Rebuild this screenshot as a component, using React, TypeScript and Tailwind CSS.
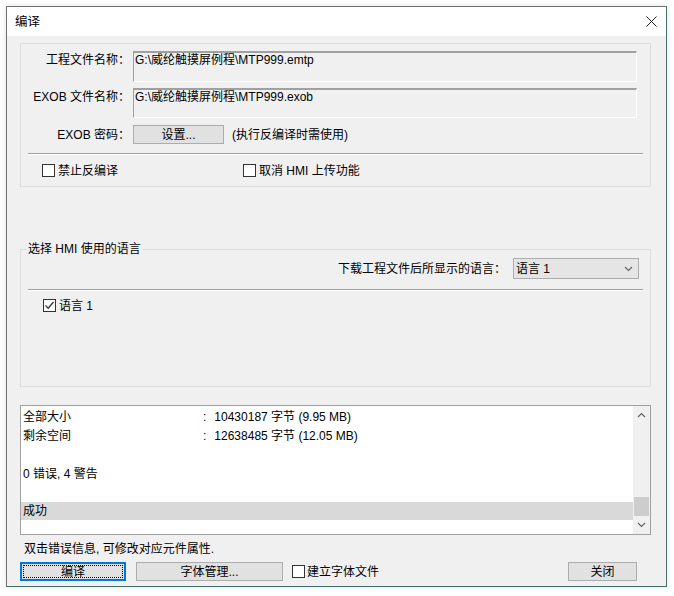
import React from 'react'

const font = { fontFamily: '"Liberation Sans", "Noto Sans CJK SC", sans-serif' }

function CheckBox({ checked = false }: { checked?: boolean }) {
  return (
    <span className="w-[13px] h-[13px] shrink-0 border border-[#333333] bg-white flex items-center justify-center">
      {checked && (
        <svg width="11" height="11" viewBox="0 0 11 11" fill="none" stroke="#333333" strokeWidth="1.3">
          <path d="M1.5 5.5 L4.2 8.2 L9.5 2" />
        </svg>
      )}
    </span>
  )
}

function Field({ text, h }: { text: string; h: string }) {
  return (
    <div className={`w-[504px] ${h} border-t-2 border-t-[#a0a0a0] border-l border-l-[#a0a0a0] border-r border-r-white border-b border-b-white bg-[#f0f0f0] pl-[1px] leading-[14px]`}>
      {text}
    </div>
  )
}

function Separator({ w }: { w: string }) {
  return <div className={`${w} h-[2px] border-t border-t-[#a0a0a0] border-b border-b-white ml-[7px]`} />
}

function Chevron({ up }: { up?: boolean }) {
  return (
    <svg width="9" height="6" viewBox="0 0 9 6" fill="none" stroke="#606060" strokeWidth="1.1">
      <path d={up ? 'M1 5 L4.5 1.5 L8 5' : 'M1 1 L4.5 4.5 L8 1'} />
    </svg>
  )
}

export default function App() {
  return (
    <div className="min-h-[596px] bg-white pt-[6px] pl-[6px] text-[12px] text-black" style={font}>
      <div className="w-[661px] h-[581px] flex flex-col border border-[#707070] border-r-[#4a6e6a] border-b-[#3f6e68] shadow-[0_0_6px_rgba(0,0,0,0.12)]">
        {/* Title bar */}
        <div className="h-[29px] bg-white flex items-center justify-between pl-[8px] pr-[9px]">
          <span className="text-[12.5px] pt-[1px]">编译</span>
          <svg width="11" height="11" viewBox="0 0 11 11" stroke="#222222" strokeWidth="1">
            <path d="M0.5 0.5 L10.5 10.5 M10.5 0.5 L0.5 10.5" />
          </svg>
        </div>

        {/* Body */}
        <div className="flex-1 bg-[#f0f0f0] pl-[13px] pt-[7px] flex flex-col leading-[16px]">
          {/* File group */}
          <div className="w-[631px] h-[144px] border border-[#dcdcdc] pt-[7px] flex flex-col">
            <div className="flex items-start">
              <span className="w-[110px] text-right pr-[1px] mt-[1px]">工程文件名称：</span>
              <div className="ml-[2px]">
                <Field h="h-[31px]" text="G:\威纶触摸屏例程\MTP999.emtp" />
              </div>
            </div>
            <div className="flex items-start mt-[6px]">
              <span className="w-[110px] text-right pr-[1px] mt-[1px]">EXOB 文件名称：</span>
              <div className="ml-[2px]">
                <Field h="h-[30px]" text="G:\威纶触摸屏例程\MTP999.exob" />
              </div>
            </div>
            <div className="flex items-center mt-[7px]">
              <span className="w-[110px] text-right pr-[1px]">EXOB 密码：</span>
              <button className="ml-[2px] w-[91px] h-[19px] bg-[#e1e1e1] border border-[#adadad] leading-[16px]">设置...</button>
              <span className="ml-[8px]">(执行反编译时需使用)</span>
            </div>
            <div className="mt-[9px]">
              <Separator w="w-[615px]" />
            </div>
            <div className="flex items-center mt-[9px] h-[13px]">
              <div className="flex items-center gap-[3px] ml-[21px] w-[201px]">
                <CheckBox />
                <span>禁止反编译</span>
              </div>
              <div className="flex items-center gap-[3px]">
                <CheckBox />
                <span>取消 HMI 上传功能</span>
              </div>
            </div>
          </div>

          {/* Language group */}
          <div className="relative w-[631px] h-[138px] border border-[#dcdcdc] mt-[62px] pt-[8px] flex flex-col">
            <span className="absolute -top-[9px] left-[6px] px-[1px] bg-[#f0f0f0]">选择 HMI 使用的语言</span>
            <div className="flex items-center justify-end pr-[11px]">
              <span className="mr-[7px]">下载工程文件后所显示的语言：</span>
              <div className="w-[126px] h-[21px] bg-[#e5e5e5] border border-[#adadad] flex items-center justify-between pl-[2px] pr-[5px]">
                <span>语言 1</span>
                <Chevron />
              </div>
            </div>
            <div className="mt-[10px]">
              <Separator w="w-[615px]" />
            </div>
            <div className="flex items-center gap-[3px] ml-[22px] mt-[8px] h-[13px]">
              <CheckBox checked />
              <span>语言 1</span>
            </div>
          </div>

          {/* Output list */}
          <div className="w-[631px] h-[130px] mt-[18px] bg-white border border-[#a0a0a0] flex">
            <div className="flex-1 pt-[2px] flex flex-col leading-[19px]">
              <div className="flex pl-[2px]">
                <span className="w-[180px]">全部大小</span>
                <span>:</span>
                <span className="ml-[8px]">10430187 字节 (9.95 MB)</span>
              </div>
              <div className="flex pl-[2px]">
                <span className="w-[180px]">剩余空间</span>
                <span>:</span>
                <span className="ml-[8px]">12638485 字节 (12.05 MB)</span>
              </div>
              <div className="h-[19px]" />
              <div className="pl-[2px]">0 错误, 4 警告</div>
              <div className="h-[18px]" />
              <div className="pl-[2px] bg-[#d9d9d9] h-[18px] leading-[18px]">成功</div>
            </div>
            <div className="w-[17px] bg-[#f0f0f0] flex flex-col items-center justify-between py-[6px]">
              <Chevron up />
              <div className="w-[15px] h-[19px] bg-[#cdcdcd] mt-auto mb-[6px]" />
              <Chevron />
            </div>
          </div>

          <div className="ml-[4px] mt-[6px]">双击错误信息, 可修改对应元件属性.</div>

          <div className="w-[617px] flex items-center mt-[5px]">
            <button className="w-[106px] h-[19px] bg-[#e1e1e1] border-2 border-[#0078d7] p-[1px]">
              <span className="w-full h-full border border-dotted border-black flex items-center justify-center leading-[14px]">编译</span>
            </button>
            <button className="ml-[10px] w-[147px] h-[19px] bg-[#e1e1e1] border border-[#adadad] leading-[16px]">字体管理...</button>
            <div className="ml-[9px] flex items-center gap-[2px]">
              <CheckBox />
              <span>建立字体文件</span>
            </div>
            <button className="ml-auto w-[69px] h-[19px] bg-[#e1e1e1] border border-[#adadad] leading-[16px]">关闭</button>
          </div>
        </div>
      </div>
    </div>
  )
}
